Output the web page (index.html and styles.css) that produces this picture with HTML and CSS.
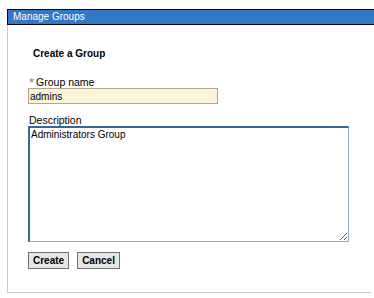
FILE: index.html
```html
<!DOCTYPE html>
<html>
<head>
<meta charset="utf-8">
<link rel="stylesheet" href="styles.css">
</head>
<body>
<div class="page">
  <div class="header">Manage Groups</div>
  <div class="panel">
    <h2 class="title">Create a Group</h2>
    <div class="field">
      <label class="label"><span class="req">*</span>Group name</label>
      <input class="name-input" type="text" value="admins">
    </div>
    <div class="field desc-field">
      <label class="label">Description</label>
      <textarea class="desc-input">Administrators Group</textarea>
    </div>
    <div class="buttons">
      <button class="btn">Create</button>
      <button class="btn">Cancel</button>
    </div>
  </div>
</div>
</body>
</html>
```
FILE: styles.css
```css
html, body {
  margin: 0;
  padding: 0;
  background: #fff;
  font-family: "Liberation Sans", Arial, sans-serif;
  font-size: 10px;
  color: #000;
}
.page {
  padding: 9px 0 0 7px;
}
.header {
  background: #3178c6;
  color: #fff;
  border: 1px solid #000;
  border-right: none;
  height: 14px;
  line-height: 14px;
  padding-left: 5px;
  font-size: 10px;
}
.panel {
  width: 364px;
  height: 268px;
  border-left: 1px solid #c8c8c8;
  border-bottom: 1px solid #c8c8c8;
  box-sizing: border-box;
  padding: 22px 0 0 20px;
}
.title {
  margin: 0 0 0 5px;
  font-size: 10px;
  font-weight: bold;
  line-height: 14px;
}
.field {
  display: flex;
  flex-direction: column;
  align-items: flex-start;
  margin-top: 15px;
}
.desc-field {
  margin-top: 10px;
}
.label {
  line-height: 12px;
  padding-left: 1px;
  font-size: 10.5px;
  display: flex;
  align-items: center;
}
.req {
  color: #7a8a5a;
  font-size: 13px;
  line-height: 12px;
  margin-right: 2px;
  position: relative;
  top: 1px;
}
.name-input {
  margin: 0;
  width: 190px;
  height: 16px;
  box-sizing: border-box;
  border: 1px solid #b0a88c;
  background: #fcf4d8;
  font-family: "Liberation Sans", Arial, sans-serif;
  font-size: 10px;
  padding: 0 1px;
}
.desc-input {
  margin: 0;
  width: 321px;
  height: 116px;
  box-sizing: border-box;
  border-style: solid;
  border-width: 2px 1px 1px 2px;
  border-color: #336699 #8aaed0 #8aaed0 #336699;
  font-family: "Liberation Sans", Arial, sans-serif;
  font-size: 10px;
  padding: 1px 1px;
  resize: both;
}
.buttons {
  display: flex;
  gap: 8px;
  margin-top: 10px;
}
.btn {
  margin: 0;
  height: 17px;
  box-sizing: border-box;
  padding: 0 4px;
  background: #e6e6e6;
  border: 1px solid #707070;
  font-family: "Liberation Sans", Arial, sans-serif;
  font-size: 10px;
  font-weight: bold;
  color: #000;
}
```
